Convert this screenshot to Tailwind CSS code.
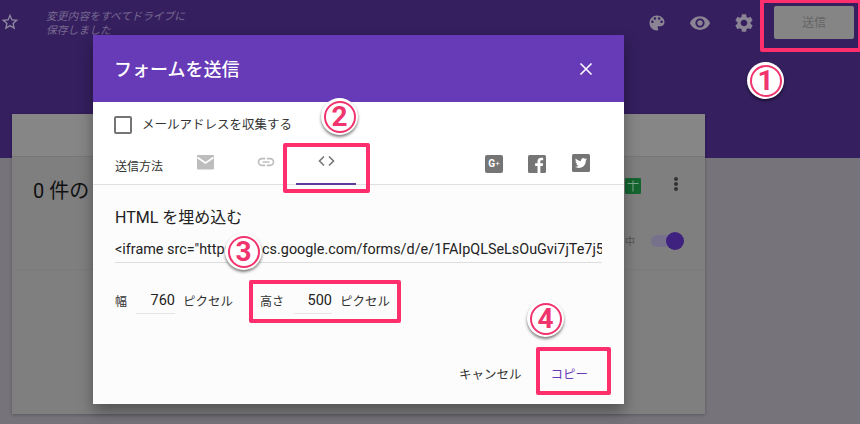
<!DOCTYPE html>
<html lang="ja">
<head>
<meta charset="utf-8">
<script src="https://cdn.jsdelivr.net/npm/@tailwindcss/browser@4"></script>
</head>
<body class="m-0">
<div class="relative w-[860px] h-[424px] overflow-hidden bg-[#76737a] font-['Roboto','Noto_Sans_CJK_JP',sans-serif] text-[#222]">

  <!-- app header (dimmed) -->
  <header class="h-[158px] bg-[#351f5f]">
    <div class="flex items-start">
      <svg class="w-[20px] h-[20px] mt-[12px] ml-0 fill-[#8e88a0]" viewBox="0 0 24 24"><path d="M22 9.24l-7.19-.62L12 2 9.19 8.63 2 9.24l5.46 4.73L5.82 21 12 17.27 18.18 21l-1.63-7.03L22 9.24zM12 15.4l-3.76 2.27 1-4.28-3.32-2.88 4.38-.38L12 6.1l1.71 4.04 4.38.38-3.32 2.88 1 4.28L12 15.4z"/></svg>
      <p class="ml-[26px] mt-[10px] w-[150px] text-[10.8px] leading-[14px] italic text-[#77698f] whitespace-nowrap">変更内容をすべてドライブに<br>保存しました</p>
      <div class="ml-auto flex items-center h-[33px] mt-[6px] mr-[6px]">
        <svg class="w-[20px] h-[20px] fill-[#8a8494]" viewBox="0 0 24 24"><path d="M12 3c-4.97 0-9 4.03-9 9s4.03 9 9 9c.83 0 1.5-.67 1.5-1.5 0-.39-.15-.74-.39-1.01-.23-.26-.38-.61-.38-.99 0-.83.67-1.5 1.5-1.5H16c2.76 0 5-2.24 5-5 0-4.42-4.03-8-9-8zm-5.5 9c-.83 0-1.5-.67-1.5-1.5S5.67 9 6.5 9 8 9.67 8 10.5 7.33 12 6.5 12zm3-4C8.67 8 8 7.33 8 6.5S8.67 5 9.5 5s1.5.67 1.5 1.5S10.33 8 9.5 8zm5 0c-.83 0-1.5-.67-1.5-1.5S13.67 5 14.5 5s1.5.67 1.5 1.5S15.33 8 14.5 8zm3 4c-.83 0-1.5-.67-1.5-1.5S16.67 9 17.5 9s1.5.67 1.5 1.5-.67 1.5-1.5 1.5z"/></svg>
        <svg class="w-[22px] h-[22px] ml-[22px] fill-[#8a8494]" viewBox="0 0 24 24"><path d="M12 4.5C7 4.5 2.73 7.61 1 12c1.73 4.39 6 7.5 11 7.5s9.27-3.11 11-7.5c-1.73-4.39-6-7.5-11-7.5zM12 17c-2.76 0-5-2.24-5-5s2.24-5 5-5 5 2.24 5 5-2.24 5-5 5zm0-8c-1.66 0-3 1.34-3 3s1.34 3 3 3 3-1.34 3-3-1.34-3-3-3z"/></svg>
        <svg class="w-[22px] h-[22px] ml-[22px] fill-[#8a8494]" viewBox="0 0 24 24"><path d="M19.14 12.94c.04-.3.06-.61.06-.94 0-.32-.02-.64-.07-.94l2.03-1.58c.18-.14.23-.41.12-.61l-1.92-3.32c-.12-.22-.37-.29-.59-.22l-2.39.96c-.5-.38-1.03-.7-1.62-.94l-.36-2.54c-.04-.24-.24-.41-.48-.41h-3.84c-.24 0-.43.17-.47.41l-.36 2.54c-.59.24-1.13.57-1.62.94l-2.39-.96c-.22-.08-.47 0-.59.22L2.74 8.87c-.12.21-.08.47.12.61l2.03 1.58c-.05.3-.09.63-.09.94s.02.64.07.94l-2.03 1.58c-.18.14-.23.41-.12.61l1.92 3.32c.12.22.37.29.59.22l2.39-.96c.5.38 1.03.7 1.62.94l.36 2.54c.05.24.24.41.48.41h3.84c.24 0 .44-.17.47-.41l.36-2.54c.59-.24 1.13-.56 1.62-.94l2.39.96c.22.08.47 0 .59-.22l1.92-3.32c.12-.22.07-.47-.12-.61l-2.01-1.58zM12 15.6c-1.98 0-3.6-1.62-3.6-3.6s1.62-3.6 3.6-3.6 3.6 1.62 3.6 3.6-1.62 3.6-3.6 3.6z"/></svg>
        <button class="ml-[19px] w-[80px] h-[33px] rounded-[2px] bg-[#858585] text-[12px] text-[#666]">送信</button>
      </div>
    </div>
  </header>

  <!-- responses card (dimmed) -->
  <main class="ml-[12px] -mt-[44px] w-[693px] h-[300px] bg-[#7f7f7f] shadow-[0_1px_3px_rgba(0,0,0,0.25)]">
    <div class="h-[43px] bg-[#868686] border-b border-[#777]"></div>
    <div class="h-[113px] border-b border-[#7b7b7b] flex items-start">
      <h2 class="ml-[21px] mt-[21px] text-[20px] leading-[26px] text-[#111] whitespace-nowrap">0 件の</h2>
      <div class="ml-auto mr-[27px] mt-[20px] flex items-start">
        <svg class="w-[16px] h-[16px] mt-[1px]" viewBox="0 0 16 16"><rect width="16" height="16" rx="1" fill="#14652f"/><path d="M2.5 5.5h11M8 2.5v11" stroke="#7fa98d" stroke-width="1" fill="none"/></svg>
        <div class="ml-[33px] flex flex-col gap-[1px]">
          <span class="w-[4px] h-[4px] rounded-full bg-[#333]"></span>
          <span class="w-[4px] h-[4px] rounded-full bg-[#333]"></span>
          <span class="w-[4px] h-[4px] rounded-full bg-[#333]"></span>
        </div>
      </div>
    </div>
  </main>
  <!-- toggle behind the dialog -->
  <div class="absolute left-[625px] top-[232px] flex items-center h-[18px]">
    <span class="text-[10px] text-[#555]">中</span>
    <div class="relative ml-[16px] w-[22px] h-[12px] rounded-full bg-[#77718c]">
      <span class="absolute left-[15px] -top-[3px] w-[18px] h-[18px] rounded-full bg-[#3f2180]"></span>
    </div>
  </div>

  <!-- dialog -->
  <section class="absolute left-[93px] top-[35px] w-[531px] h-[369px] flex flex-col bg-[#fcfcfc] shadow-[0_8px_14px_rgba(0,0,0,0.35)]">
    <div class="h-[67px] shrink-0 bg-[#673ab7] flex items-center justify-between pl-[21px] pr-[31px]">
      <h1 class="pt-[3px] text-[18px] font-medium text-white leading-none">フォームを送信</h1>
      <svg class="w-[14px] h-[14px] stroke-white" viewBox="0 0 14 14" fill="none" stroke-width="1.6"><path d="M1.5 1.5l11 11M12.5 1.5l-11 11"/></svg>
    </div>
    <div class="h-[83px] shrink-0 bg-white border-b border-[#e0e0e0] relative">
      <label class="flex items-center pl-[21px] pt-[14px]">
        <span class="w-[18px] h-[18px] rounded-[2px] border-2 border-[#757575]"></span>
        <span class="ml-[10px] text-[12.5px] leading-[18px] text-[#333]">メールアドレスを収集する</span>
      </label>
      <div class="flex items-start mt-[21px] relative h-[20px]">
        <span class="ml-[22px] w-[50px] mt-[2px] text-[12px] leading-[20px] text-[#333]">送信方法</span>
        <svg class="ml-[31px] w-[19px] h-[15px]" viewBox="0 0 19 15"><rect x="1" width="17" height="14.5" rx="1" fill="#bdbdbd"/><path d="M1.5 2.5l8 5.5 8-5.5" stroke="#fff" stroke-width="1.8" fill="none"/></svg>
        <svg class="ml-[41px] -mt-[3px] w-[20px] h-[20px] fill-[#bdbdbd]" viewBox="0 0 24 24"><path d="M3.9 12c0-1.71 1.39-3.1 3.1-3.1h4V7H7c-2.76 0-5 2.24-5 5s2.24 5 5 5h4v-1.9H7c-1.71 0-3.1-1.39-3.1-3.1zM8 13h8v-2H8v2zm9-6h-4v1.9h4c1.71 0 3.1 1.39 3.1 3.1s-1.39 3.1-3.1 3.1h-4V17h4c2.76 0 5-2.24 5-5s-2.24-5-5-5z"/></svg>
        <svg class="ml-[41px] w-[19px] h-[12px] stroke-[#757575]" viewBox="0 0 19 12" fill="none" stroke-width="1.6"><path d="M7 1.5L2.5 6 7 10.5M12 1.5L16.5 6 12 10.5"/></svg>
        <div class="ml-[149px] flex items-start">
          <div class="w-[18px] h-[18px] rounded-[2px] bg-[#757575] flex items-center justify-center text-[10px] font-bold text-white leading-none">G<span class="text-[8px] font-normal">+</span></div>
          <svg class="ml-[25px] w-[18px] h-[18px]" viewBox="0 0 24 24"><rect width="24" height="24" rx="2" fill="#757575"/><path d="M16.5 24v-9.3h3.1l.5-3.7h-3.6V8.7c0-1.1.3-1.8 1.8-1.8h1.9V3.6c-.3 0-1.5-.1-2.8-.1-2.8 0-4.7 1.7-4.7 4.8V11H9.5v3.7h3.2V24z" fill="#fff"/></svg>
          <svg class="ml-[26px] -mt-[1px] w-[18px] h-[18px]" viewBox="0 0 24 24"><rect width="24" height="24" rx="2" fill="#757575"/><path transform="translate(4 4) scale(.667)" d="M23.953 4.57a10 10 0 01-2.825.775 4.958 4.958 0 002.163-2.723c-.951.555-2.005.959-3.127 1.184a4.92 4.92 0 00-8.384 4.482C7.69 8.095 4.067 6.13 1.64 3.162a4.822 4.822 0 00-.666 2.475c0 1.71.87 3.213 2.188 4.096a4.904 4.904 0 01-2.228-.616v.06a4.923 4.923 0 003.946 4.827 4.996 4.996 0 01-2.212.085 4.936 4.936 0 004.604 3.417 9.867 9.867 0 01-6.102 2.105c-.39 0-.779-.023-1.17-.067a13.995 13.995 0 007.557 2.209c9.053 0 13.998-7.496 13.998-13.985 0-.21 0-.42-.015-.63A9.935 9.935 0 0024 4.59z" fill="#fff"/></svg>
        </div>
      </div>
      <span class="absolute left-[203px] bottom-[-1px] w-[60px] h-[2px] bg-[#5e3c9e]"></span>
    </div>
    <div class="flex-1 flex flex-col pl-[22px] pr-[22px]">
      <h2 class="mt-[21px] text-[16px] leading-[24px] text-[#222]">HTML を埋め込む</h2>
      <div class="mt-[9px] h-[24px] border-b border-[#ddd] overflow-hidden whitespace-nowrap text-[14.38px] leading-[22px] text-[#222]">&lt;iframe src="https://docs.google.com/forms/d/e/1FAIpQLSeLsOuGvi7jTe7j5</div>
      <div class="mt-[26px] flex items-start">
        <span class="w-[21px] text-[12px] leading-[26px] text-[#333]">幅</span>
        <span class="w-[39px] h-[25px] border-b border-[#e5e5e5] text-right text-[14.5px] leading-[23px] text-[#222]">760</span>
        <span class="ml-[8px] w-[49px] text-[12.5px] leading-[26px] text-[#333] whitespace-nowrap">ピクセル</span>
        <span class="ml-[28px] w-[34px] text-[12px] leading-[26px] text-[#333]">高さ</span>
        <span class="w-[38px] h-[25px] border-b border-[#e5e5e5] text-right text-[14.5px] leading-[23px] text-[#222]">500</span>
        <span class="ml-[8px] text-[12.5px] leading-[26px] text-[#333] whitespace-nowrap">ピクセル</span>
      </div>
      <div class="mt-auto mb-[19px] mr-[14px] flex justify-end items-center text-[12.5px] leading-[20px]">
        <button class="text-[#333]">キャンセル</button>
        <button class="ml-[29px] text-[#673ab7]">コピー</button>
      </div>
    </div>
  </section>

  <!-- annotation highlights -->
  <div class="absolute left-[760px] -top-[1px] w-[102px] h-[53px] border-[4px] border-[#ff2f6e] rounded-[2px]"></div>
  <div class="absolute left-[283px] top-[143px] w-[87px] h-[50px] border-[4px] border-[#ff2f6e] rounded-[2px]"></div>
  <div class="absolute left-[249px] top-[280px] w-[152px] h-[43px] border-[4px] border-[#ff2f6e] rounded-[2px]"></div>
  <div class="absolute left-[536px] top-[347px] w-[75px] h-[48px] border-[4px] border-[#ff2f6e] rounded-[2px]"></div>

  <!-- annotation numbers -->
  <div class="absolute left-[747px] top-[62px] w-[37px] h-[37px] rounded-full bg-white shadow-[0_2px_3px_rgba(0,0,0,0.5)] flex items-center justify-center"><span class="w-[32px] h-[32px] rounded-full border-[2.5px] border-[#f0346e] flex items-center justify-center text-[28px] font-bold text-[#f0346e] leading-none">1</span></div>
  <div class="absolute left-[321px] top-[98px] w-[37px] h-[37px] rounded-full bg-white shadow-[0_2px_3px_rgba(0,0,0,0.5)] flex items-center justify-center"><span class="w-[32px] h-[32px] rounded-full border-[2.5px] border-[#f0346e] flex items-center justify-center text-[28px] font-bold text-[#f0346e] leading-none">2</span></div>
  <div class="absolute left-[225px] top-[233px] w-[37px] h-[37px] rounded-full bg-white shadow-[0_2px_3px_rgba(0,0,0,0.5)] flex items-center justify-center"><span class="w-[32px] h-[32px] rounded-full border-[2.5px] border-[#f0346e] flex items-center justify-center text-[28px] font-bold text-[#f0346e] leading-none">3</span></div>
  <div class="absolute left-[527px] top-[300px] w-[37px] h-[37px] rounded-full bg-white shadow-[0_2px_3px_rgba(0,0,0,0.5)] flex items-center justify-center"><span class="w-[32px] h-[32px] rounded-full border-[2.5px] border-[#f0346e] flex items-center justify-center text-[28px] font-bold text-[#f0346e] leading-none">4</span></div>
</div>
</body>
</html>
